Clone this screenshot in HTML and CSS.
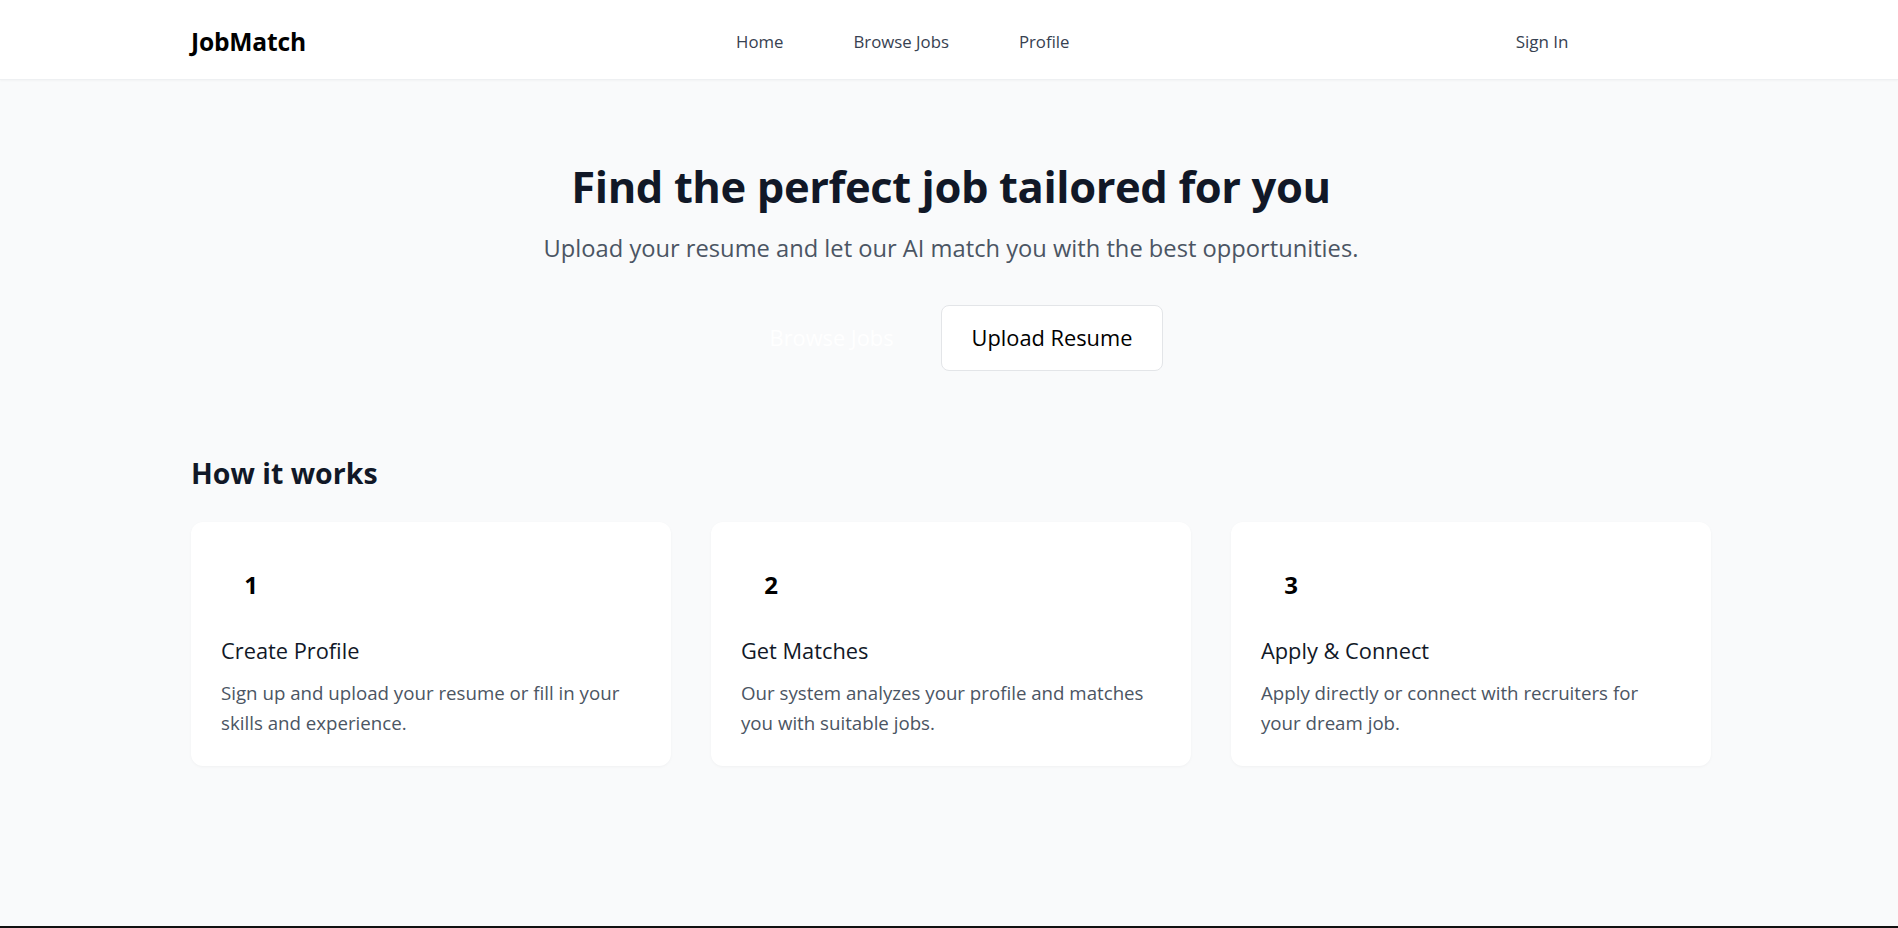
FILE: index.html
```html
<!DOCTYPE html>
<html lang="en">
<head>
<meta charset="utf-8">
<title>JobMatch</title>
<link rel="stylesheet" href="styles.css">
</head>
<body>
<header class="site-header">
  <div class="container header-inner">
    <a class="logo" href="#">JobMatch</a>
    <nav class="main-nav">
      <a href="#">Home</a>
      <a href="#">Browse Jobs</a>
      <a href="#">Profile</a>
    </nav>
    <div class="auth">
      <a class="btn-signin" href="#">Sign In</a>
      <a class="btn-signup" href="#">Sign Up</a>
    </div>
  </div>
</header>
<main class="page">
  <section class="hero">
    <h1 class="hero-title">Find the perfect job tailored for you</h1>
    <p class="hero-sub">Upload your resume and let our AI match you with the best opportunities.</p>
    <div class="hero-actions">
      <a class="btn btn-primary" href="#">Browse Jobs</a>
      <a class="btn btn-outline" href="#">Upload Resume</a>
    </div>
  </section>
  <section class="how container">
    <h2 class="how-title">How it works</h2>
    <div class="steps">
      <div class="step-card">
        <div class="step-num">1</div>
        <h3 class="step-title">Create Profile</h3>
        <p class="step-text">Sign up and upload your resume or fill in your skills and experience.</p>
      </div>
      <div class="step-card">
        <div class="step-num">2</div>
        <h3 class="step-title">Get Matches</h3>
        <p class="step-text">Our system analyzes your profile and matches you with suitable jobs.</p>
      </div>
      <div class="step-card">
        <div class="step-num">3</div>
        <h3 class="step-title">Apply &amp; Connect</h3>
        <p class="step-text">Apply directly or connect with recruiters for your dream job.</p>
      </div>
    </div>
  </section>
</main>
<footer class="site-footer"></footer>
</body>
</html>
```
FILE: styles.css
```css
* { box-sizing: border-box; }
html, body { margin: 0; padding: 0; }
body {
  font-family: "Open Sans", "Noto Sans", sans-serif;
  background: #f9fafb;
  color: #111827;
  padding-left: 4px;
}
a { text-decoration: none; }

.container {
  width: 1520px;
  margin: 0 auto;
}

.site-header {
  background: #ffffff;
  border-bottom: 1px solid #eef0f2;
  box-shadow: 0 1px 2px rgba(0, 0, 0, 0.03);
  margin-left: -4px;
  padding-left: 4px;
}
.header-inner {
  height: 79px;
  padding-top: 3px;
  display: flex;
  align-items: center;
  justify-content: space-between;
}
.logo {
  font-size: 24.6px;
  font-weight: 700;
  color: #000000;
  letter-spacing: -0.2px;
}
.main-nav {
  display: flex;
  gap: 70px;
}
.main-nav a {
  font-size: 16.8px;
  font-weight: 500;
  color: #374151;
}
.auth {
  display: flex;
  align-items: center;
  gap: 16px;
}
.btn-signin {
  font-size: 17px;
  font-weight: 500;
  color: #374151;
  padding: 8px 16px;
}
.btn-signup {
  font-size: 17px;
  font-weight: 500;
  color: #ffffff;
  padding: 8px 25px;
}

.hero {
  text-align: center;
  padding: 81px 0 83px;
}
.hero-title {
  margin: 0;
  font-size: 43.5px;
  line-height: 52px;
  font-weight: 700;
  color: #111827;
  letter-spacing: -0.4px;
}
.hero-sub {
  margin: 19px 0 0;
  font-size: 23.7px;
  line-height: 32px;
  color: #4b5563;
}
.hero-actions {
  display: flex;
  justify-content: center;
  gap: 16px;
  margin-top: 41px;
}
.btn {
  display: inline-block;
  font-size: 21.8px;
  line-height: 28px;
  font-weight: 500;
  padding: 18px 30px;
  border-radius: 8px;
  border: 1px solid transparent;
}
.btn-primary {
  color: #ffffff;
}
.btn-outline {
  color: #000000;
  background: #ffffff;
  border-color: #e3e5e8;
}

.how {
  padding-bottom: 160px;
}
.how-title {
  margin: 0 0 30px;
  font-size: 28.5px;
  line-height: 38px;
  font-weight: 700;
  color: #111827;
}
.steps {
  display: grid;
  grid-template-columns: repeat(3, 1fr);
  gap: 40px;
}
.step-card {
  background: #ffffff;
  border-radius: 12px;
  padding: 32px 30px 28px;
  box-shadow: 0 1px 3px rgba(0, 0, 0, 0.04);
}
.step-num {
  width: 60px;
  height: 60px;
  display: flex;
  align-items: center;
  justify-content: center;
  font-size: 24px;
  font-weight: 700;
  color: #000000;
  margin-bottom: 23px;
}
.step-title {
  margin: 0 0 13px;
  font-size: 21.8px;
  line-height: 28px;
  font-weight: 500;
  color: #111827;
}
.step-text {
  margin: 0;
  font-size: 18.7px;
  line-height: 30px;
  color: #4b5563;
}

.site-footer {
  height: 40px;
  background: #111111;
  margin-left: -4px;
}
```
